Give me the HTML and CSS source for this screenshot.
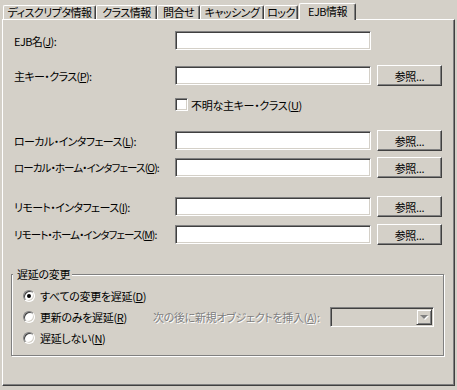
FILE: index.html
```html
<!DOCTYPE html>
<html lang="ja">
<head>
<meta charset="utf-8">
<title>EJB情報</title>
<link rel="stylesheet" href="styles.css">
</head>
<body>
<div class="window">
  <div class="tabs">
    <div class="tab t1">ディスクリプタ情報</div>
    <div class="tab t2">クラス情報</div>
    <div class="tab t3">問合せ</div>
    <div class="tab t4">キャッシング</div>
    <div class="tab t5">ロック</div>
    <div class="tab active t6">EJB情報</div>
  </div>
  <div class="panel">
    <div class="row r1"><span class="lbl">EJB名(<u>J</u>):</span><span class="field"></span></div>
    <div class="row r2"><span class="lbl">主キー・クラス(<u>P</u>):</span><span class="field"></span><span class="btn">参照...</span></div>
    <div class="row check-row"><span class="check"></span><span class="check-text">不明な主キー・クラス(<u>U</u>)</span></div>
    <div class="row r4"><span class="lbl">ローカル・インタフェース(<u>L</u>):</span><span class="field"></span><span class="btn">参照...</span></div>
    <div class="row r5"><span class="lbl long">ローカル・ホーム・インタフェース(<u>O</u>):</span><span class="field"></span><span class="btn">参照...</span></div>
    <div class="row r6"><span class="lbl">リモート・インタフェース(<u>I</u>):</span><span class="field"></span><span class="btn">参照...</span></div>
    <div class="row r7"><span class="lbl long">リモート・ホーム・インタフェース(<u>M</u>):</span><span class="field"></span><span class="btn">参照...</span></div>
    <div class="group">
      <span class="legend">遅延の変更</span>
      <div class="radio-row"><span class="radio on"></span><span class="radio-text">すべての変更を遅延(<u>D</u>)</span></div>
      <div class="radio-row">
        <span class="radio-item"><span class="radio"></span><span class="radio-text">更新のみを遅延(<u>R</u>)</span></span>
        <span class="disabled">次の後に新規オブジェクトを挿入(<u>A</u>):</span>
        <span class="combo"><span class="drop"><span class="arrow"></span></span></span>
      </div>
      <div class="radio-row"><span class="radio"></span><span class="radio-text">遅延しない(<u>N</u>)</span></div>
    </div>
  </div>
</div>
</body>
</html>
```

FILE: styles.css
```css
html, body {
  margin: 0;
  padding: 0;
}
body {
  background: #d4d0c8;
  width: 457px;
  height: 390px;
  overflow: hidden;
  font-family: "Noto Sans CJK JP", "Noto Sans", sans-serif;
  font-size: 11px;
  letter-spacing: -0.3px;
  font-feature-settings: "palt";
  color: #000;
}
u {
  text-decoration: underline;
  text-underline-offset: 1px;
}
.window {
  display: flex;
  flex-direction: column;
}
.tabs {
  display: flex;
  align-items: flex-end;
  height: 19px;
  padding-left: 3px;
}
.tab {
  box-sizing: border-box;
  height: 14px;
  line-height: 13px;
  display: flex;
  justify-content: center;
  white-space: nowrap;
  letter-spacing: -0.5px;
  border-top: 1px solid #fff;
  border-left: 1px solid #fff;
  border-right: 1px solid #404040;
  box-shadow: inset -1px 0 0 #808080;
  border-radius: 2px 2px 0 0;
  background: #d4d0c8;
}
.t1 { width: 93px; }
.t2 { width: 61px; }
.t3 { width: 43px; }
.t4 { width: 64px; }
.t5 { width: 34px; }
.t6 { width: 57px; }
.tab.active {
  height: 17px;
  line-height: 14px;
  margin-bottom: -1px;
  margin-left: 1px;
  position: relative;
  z-index: 1;
}
.panel {
  box-sizing: border-box;
  margin-left: 2px;
  width: 453px;
  height: 367px;
  border-top: 1px solid #fff;
  border-left: 1px solid #fff;
  border-right: 1px solid #404040;
  border-bottom: 1px solid #404040;
  box-shadow: inset -1px -1px 0 #808080;
  padding: 10px 0 0 8px;
  display: flex;
  flex-direction: column;
}
.row {
  display: flex;
  align-items: center;
  height: 21px;
  margin-left: 3px;
}
.r2 { margin-top: 14px; }
.check-row { height: 17px; margin-top: 10px; padding-left: 161px; }
.r4 { margin-top: 17px; }
.r5 { margin-top: 6px; }
.r6 { margin-top: 18px; }
.r7 { margin-top: 7px; }
.lbl {
  width: 161px;
  flex: none;
  white-space: nowrap;
  line-height: 14px;
  letter-spacing: -0.6px;
}
.lbl.long {
  font-size: 10.5px;
  letter-spacing: -0.9px;
}
.field {
  box-sizing: border-box;
  width: 196px;
  height: 19px;
  background: #fff;
  border-top: 1px solid #808080;
  border-left: 1px solid #808080;
  border-right: 1px solid #fff;
  border-bottom: 1px solid #fff;
  box-shadow: inset 1px 1px 0 #404040, inset -1px -1px 0 #d4d0c8;
}
.btn {
  box-sizing: border-box;
  width: 65px;
  height: 21px;
  margin-left: 6px;
  border-top: 1px solid #fff;
  border-left: 1px solid #fff;
  border-right: 1px solid #404040;
  border-bottom: 1px solid #404040;
  box-shadow: inset -1px -1px 0 #808080;
  display: flex;
  align-items: center;
  justify-content: center;
  line-height: 14px;
}
.check {
  box-sizing: border-box;
  width: 13px;
  height: 13px;
  background: #fff;
  border-top: 1px solid #808080;
  border-left: 1px solid #808080;
  border-right: 1px solid #fff;
  border-bottom: 1px solid #fff;
  box-shadow: inset 1px 1px 0 #404040, inset -1px -1px 0 #d4d0c8;
}
.check-text {
  margin-left: 3px;
  line-height: 14px;
}
.group {
  box-sizing: border-box;
  position: relative;
  margin-top: 29px;
  width: 433px;
  height: 82px;
  border: 1px solid #808080;
  box-shadow: inset 1px 1px 0 #fff, 1px 1px 0 #fff;
  padding: 10px 0 0 11px;
  display: flex;
  flex-direction: column;
}
.legend {
  position: absolute;
  top: -9px;
  left: 1px;
  line-height: 16px;
  padding: 0 2px 0 4px;
  background: #d4d0c8;
}
.radio-row {
  display: flex;
  align-items: center;
  height: 21px;
}
.radio-item {
  display: flex;
  align-items: center;
  width: 130px;
}
.radio {
  box-sizing: border-box;
  width: 12px;
  height: 12px;
  border-radius: 50%;
  background: #fff;
  border: 1px solid;
  border-color: #808080 #fff #fff #808080;
  box-shadow: inset 1px 1px 0 #404040, inset -1px -1px 0 #d4d0c8;
  display: flex;
  align-items: center;
  justify-content: center;
  flex: none;
}
.radio.on::after {
  content: "";
  width: 4px;
  height: 4px;
  border-radius: 50%;
  background: #000;
}
.radio-text {
  margin-left: 5px;
  line-height: 14px;
  white-space: nowrap;
}
.disabled {
  flex: 1;
  color: #808080;
  text-shadow: 1px 1px 0 #fff;
  white-space: nowrap;
  line-height: 14px;
}
.combo {
  box-sizing: border-box;
  width: 104px;
  height: 20px;
  margin-right: 9px;
  background: #d4d0c8;
  border-top: 1px solid #808080;
  border-left: 1px solid #808080;
  border-right: 1px solid #fff;
  border-bottom: 1px solid #fff;
  box-shadow: inset 1px 1px 0 #404040, inset -1px -1px 0 #d4d0c8;
  display: flex;
  justify-content: flex-end;
  padding: 1px;
}
.drop {
  box-sizing: border-box;
  width: 16px;
  height: 16px;
  border-top: 1px solid #d4d0c8;
  border-left: 1px solid #d4d0c8;
  border-right: 1px solid #404040;
  border-bottom: 1px solid #404040;
  box-shadow: inset 1px 1px 0 #fff, inset -1px -1px 0 #808080;
  display: flex;
  align-items: center;
  justify-content: center;
}
.arrow {
  width: 0;
  height: 0;
  border-left: 4px solid transparent;
  border-right: 4px solid transparent;
  border-top: 4px solid #808080;
  filter: drop-shadow(1px 1px 0 #fff);
}
```
